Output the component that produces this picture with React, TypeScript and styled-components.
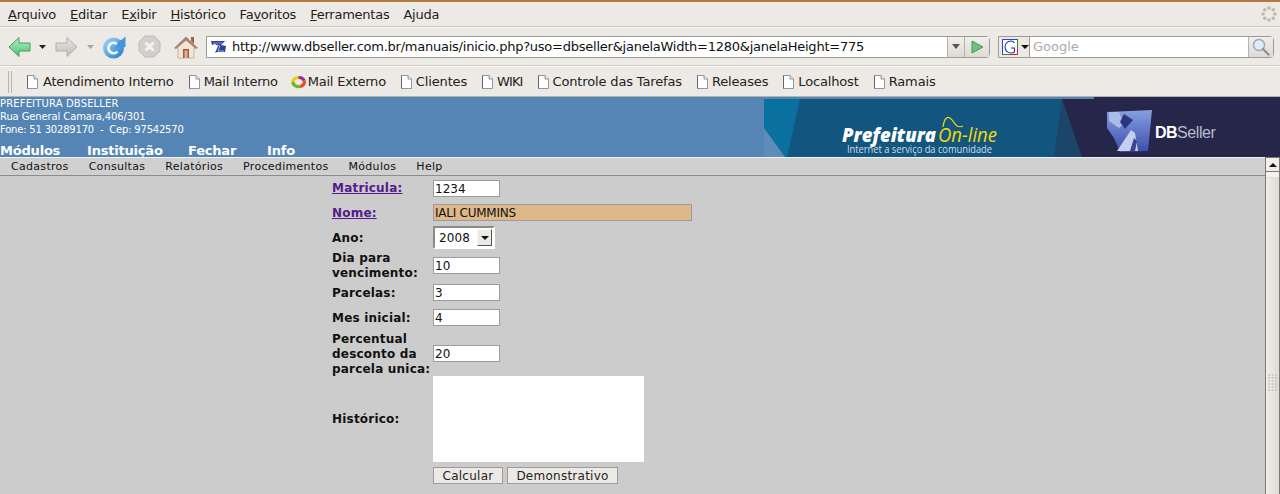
import React from 'react'
import styled, { createGlobalStyle } from 'styled-components'

const GlobalStyle = createGlobalStyle`
  * {
    box-sizing: border-box;
  }

  html, body {
    margin: 0;
    padding: 0;
    height: 494px;
    overflow: hidden;
    background: #cccccc;
    font-family: "DejaVu Sans", sans-serif;
  }
`

const Page = styled.div`
  width: 1280px;
  height: 494px;
  display: flex;
  flex-direction: column;
  overflow: hidden;
`

const MenuBar = styled.div`
  height: 27px;
  flex: 0 0 auto;
  display: flex;
  align-items: center;
  justify-content: space-between;
  padding: 0 3px 0 8px;
  background: #edeae5;
  border-top: 2px solid #b8783c;
  border-bottom: 1px solid #cdc9c2;
  font-size: 13px;
  letter-spacing: -0.24px;
  color: #1e1e1e;
`

const MenuItems = styled.div`
  display: flex;
  gap: 14px;
`

const Accel = styled.span`
  text-decoration: underline;
`

const NavBar = styled.div`
  height: 39px;
  flex: 0 0 auto;
  display: flex;
  align-items: center;
  background: #edeae5;
  border-top: 1px solid #f6f4f1;
  border-bottom: 1px solid #d3cfc8;
  padding-left: 8px;
`

const NavIcon = styled.svg<{ $mr: number }>`
  display: block;
  flex: 0 0 auto;
  margin-right: ${p => p.$mr}px;
`

const UrlBox = styled.div`
  width: 784px;
  height: 22px;
  flex: 0 0 auto;
  display: flex;
  border: 1px solid #9a9a9a;
  border-radius: 0 4px 4px 0;
  background: #fff;
  font-size: 13px;
  letter-spacing: -0.24px;
  color: #111;
`

const UrlText = styled.div`
  flex: 1 1;
  display: flex;
  align-items: center;
  gap: 5px;
  padding-left: 4px;
  white-space: nowrap;
`

const BoxButton = styled.div<{ $w: number }>`
  flex: 0 0 auto;
  width: ${p => p.$w}px;
  display: flex;
  align-items: center;
  justify-content: center;
  background: linear-gradient(#f1efeb, #dedad4);
  border-left: 1px solid #b5b2ac;
`

const SearchBox = styled.div`
  width: 276px;
  height: 22px;
  flex: 0 0 auto;
  margin-left: 8px;
  display: flex;
  border: 1px solid #9a9a9a;
  border-radius: 0 4px 4px 0;
  background: #fff;
  font-size: 13px;
`

const EngineButton = styled.div`
  width: 31px;
  flex: 0 0 auto;
  display: flex;
  align-items: center;
  gap: 3px;
  padding-left: 3px;
  background: #edeae5;
  border-right: 1px solid #9a9a9a;
`

const SearchInput = styled.div`
  flex: 1 1;
  display: flex;
  align-items: center;
  padding-left: 3px;
  color: #ababab;
`

const BookmarksBar = styled.div`
  height: 31px;
  flex: 0 0 auto;
  display: flex;
  align-items: center;
  background: #edeae5;
  border-top: 1px solid #f6f4f1;
  border-bottom: 1px solid #b5b2ac;
  font-size: 13px;
  color: #222;
`

const Grip = styled.div`
  width: 4px;
  height: 22px;
  margin-left: 8px;
  flex: 0 0 auto;
  border-left: 1px solid #b9b5ae;
  border-right: 1px solid #b9b5ae;
`

const Bookmark = styled.div<{ $ml: number; $gap: number; $ls: number }>`
  display: flex;
  align-items: center;
  gap: ${p => p.$gap}px;
  margin-left: ${p => p.$ml}px;
  letter-spacing: ${p => p.$ls}px;
  white-space: nowrap;
`

const Header = styled.div`
  height: 60px;
  flex: 0 0 auto;
  display: flex;
  justify-content: space-between;
  background: #5585b5;
`

const HeaderInfo = styled.div`
  display: flex;
  flex-direction: column;
  color: #fff;
`

const AddressLine = styled.div<{ $ls: number }>`
  font-size: 10px;
  line-height: 13px;
  letter-spacing: ${p => p.$ls}px;
  white-space: pre;
`

const HeaderLinks = styled.div`
  display: flex;
  margin-top: 7px;
  font-size: 13px;
  font-weight: bold;
  line-height: 15px;
  letter-spacing: -0.2px;
`

const HeaderLink = styled.span<{ $w: number }>`
  width: ${p => p.$w}px;
`

const Banner = styled.svg`
  display: block;
  flex: 0 0 auto;
`

const Body = styled.div`
  flex: 1 1;
  display: flex;
  min-height: 0;
`

const Main = styled.div`
  flex: 1 1;
  min-width: 0;
  background: #cccccc;
`

const SubMenu = styled.div`
  height: 19px;
  display: flex;
  align-items: center;
  gap: 20px;
  padding-left: 11px;
  background: #d0d0d0;
  border-top: 1px solid #f2f2f2;
  border-bottom: 1px solid #8c8c8c;
  font-size: 11px;
  letter-spacing: 0.3px;
  color: #111;
`

const Form = styled.div`
  padding-left: 332px;
`

const Row = styled.div<{ $h: number }>`
  height: ${p => p.$h}px;
  display: flex;
  align-items: center;
`

const Label = styled.div<{ $pt?: number }>`
  width: 101px;
  flex: 0 0 auto;
  padding-top: ${p => p.$pt ?? 2}px;
  font-size: 12px;
  line-height: 15px;
  font-weight: bold;
  letter-spacing: 0.2px;
  color: #111;
`

const LinkLabel = styled(Label)`
  color: #551a8b;
  text-decoration: underline;
`

const TextInput = styled.div<{ $w: number; $bg?: string }>`
  width: ${p => p.$w}px;
  height: 17px;
  border: 1px solid #9c9c9c;
  background: ${p => p.$bg || '#fff'};
  font-size: 12px;
  line-height: 17px;
  padding-left: 1px;
  color: #111;
`

const NameInput = styled(TextInput)`
  letter-spacing: -0.25px;
`

const Select = styled.div`
  width: 62px;
  height: 23px;
  display: flex;
  align-items: center;
  justify-content: space-between;
  padding: 0 1px 0 4px;
  background: #fff;
  border: 2px solid;
  border-color: #8a8a8a #fff #fff #8a8a8a;
  font-size: 12px;
  letter-spacing: 0.1px;
  color: #111;
`

const SelectArrow = styled.div`
  width: 15px;
  height: 17px;
  display: flex;
  align-items: center;
  justify-content: center;
  background: #edeae5;
  border: 1px solid;
  border-color: #f8f8f8 #555 #555 #f8f8f8;
`

const ArrowDown = styled.div`
  border-left: 4px solid transparent;
  border-right: 4px solid transparent;
  border-top: 4px solid #111;
`

const ArrowDownGrey = styled(ArrowDown)`
  border-top-color: #555;
  border-top-width: 5px;
`

const TextArea = styled.div`
  width: 211px;
  height: 86px;
  background: #fff;
`

const Buttons = styled.div`
  display: flex;
  gap: 4px;
  padding: 5px 0 0 101px;
`

const Button = styled.div<{ $w: number }>`
  width: ${p => p.$w}px;
  height: 17px;
  border: 1px solid #9c9c9c;
  background: #edeae5;
  font-size: 12px;
  line-height: 17px;
  letter-spacing: 0.25px;
  text-align: center;
  color: #222;
`

const ScrollBar = styled.div`
  width: 15px;
  flex: 0 0 auto;
  display: flex;
  flex-direction: column;
  border-left: 1px solid #7d7770;
  border-right: 1px solid #7d7770;
  background: linear-gradient(90deg, #f2efeb, #ded9d3);
`

const ScrollButton = styled.div`
  height: 15px;
  flex: 0 0 auto;
  display: flex;
  align-items: center;
  justify-content: center;
  background: #f2f0ed;
  border-top: 1px solid #7d7770;
  border-bottom: 1px solid #7d7770;
`

const ArrowUp = styled.div`
  border-left: 4px solid transparent;
  border-right: 4px solid transparent;
  border-bottom: 4px solid #111;
`

const ScrollCap = styled.div`
  height: 6px;
  flex: 0 0 auto;
  background: #f4f2ef;
  border-bottom: 1px solid #dfdbd5;
`

const ScrollThumb = styled.div`
  flex: 1 1;
  display: flex;
  align-items: flex-start;
  justify-content: center;
  padding-top: 196px;
`

const DocIcon = () => (
  <svg width="13" height="14" viewBox="0 0 13 14">
    <path d="M1.500.5h6.500l3.500 3.500v9.500h-10z" fill="#fff" stroke="#8d96a3" />
    <path d="M8 .5v3.500h3.500" fill="#e3e6ea" stroke="#8d96a3" />
    <path d="M1.500 .5v13" stroke="#5d6a7c" />
  </svg>
)

const RingIcon = () => (
  <svg width="15" height="14" viewBox="0 0 15 14">
    <path d="M2 7a5.500 4.500 0 0 1 5.500-4.500" fill="none" stroke="#e8d000" strokeWidth="3.200" />
    <path d="M7.500 2.500a5.500 4.500 0 0 1 5.500 3" fill="none" stroke="#a02a9a" strokeWidth="3.200" />
    <path d="M13 5.500a5.500 4.500 0 0 1-4 6" fill="none" stroke="#e0502a" strokeWidth="3.200" />
    <path d="M9 11.500a5.500 4.500 0 0 1-7-4.500" fill="none" stroke="#6ab82c" strokeWidth="3.200" />
  </svg>
)

const SiteIcon = () => (
  <svg width="16" height="16" viewBox="0 0 16 16">
    <path d="M0 2h14l-4 4 5 1-1 6H6l-2 1 3-7-3-2-3 1z" fill="#2c3f9c" />
    <path d="M6 6l3 1-2 5h6" fill="none" stroke="#a9b5e0" />
    <path d="M2 4h9" stroke="#8f9cd8" />
  </svg>
)

const BackIcon = ({ active, mr }: { active: boolean; mr: number }) => {
  const id = active ? 'bk' : 'fw'
  return (
    <NavIcon
      $mr={mr}
      width="23"
      height="22"
      viewBox="0 0 23 22"
      style={active ? undefined : { transform: 'scaleX(-1)' }}
    >
      <defs>
        <linearGradient id={id} x1="0" y1="0" x2="0" y2="1">
          <stop offset="0" stopColor={active ? '#b5efc0' : '#e8e8e6'} />
          <stop offset="1" stopColor={active ? '#4fbf75' : '#bdbdba'} />
        </linearGradient>
      </defs>
      <path
        d="M1 11 11 1.500v5.500h11v8H11v5.500z"
        fill={`url(#${id})`}
        stroke={active ? '#3f9f5f' : '#b0b0ad'}
        strokeLinejoin="round"
      />
    </NavIcon>
  )
}

const SmallCaret = ({ color, mr }: { color: string; mr: number }) => (
  <NavIcon $mr={mr} width="7" height="4" viewBox="0 0 7 4">
    <path d="M0 0h7L3.500 4z" fill={color} />
  </NavIcon>
)

const ReloadIcon = () => (
  <NavIcon $mr={12} width="24" height="24" viewBox="0 0 24 24">
    <defs>
      <linearGradient id="rl" x1="0" y1="0" x2="1" y2="1">
        <stop offset="0" stopColor="#a6dcf7" />
        <stop offset="1" stopColor="#1a78cc" />
      </linearGradient>
    </defs>
    <circle cx="11.500" cy="13" r="10.500" fill="url(#rl)" />
    <path d="M15.500 9.500a5.200 5.200 0 1 0 0 7" fill="none" stroke="#f6fafd" strokeWidth="2.600" />
    <path d="M13 12.500 23.500 12V1.500l-3.500 3-3.500 2z" fill="#3d98e0" />
  </NavIcon>
)

const StopIcon = () => (
  <NavIcon $mr={13} width="23" height="23" viewBox="0 0 23 23">
    <path d="M7 1h9l6 6v9l-6 6H7l-6-6V7z" fill="#d2d0cc" stroke="#bdbbb6" />
    <path d="M7.500 7.500l8 8m0-8-8 8" stroke="#f4f3f1" strokeWidth="3" />
  </NavIcon>
)

const HomeIcon = () => (
  <NavIcon $mr={8} width="24" height="24" viewBox="0 0 24 24">
    <path d="M4 11.500V23h16V11.500L12 4z" fill="#f0e6d8" stroke="#c7b49c" />
    <path d="M17 2h3v7l-3-3z" fill="#a5624a" />
    <path d="M0 13 12 1.500 24 13l-2 1-10-8.500L2 14z" fill="#a98370" />
    <path d="M9 14h6v9H9z" fill="#a0603c" />
    <path d="M10.500 15.500h3V23h-3z" fill="#dcb090" />
  </NavIcon>
)

const GoIcon = () => (
  <svg width="13" height="14" viewBox="0 0 13 14">
    <path d="M1 1l11 6-11 6z" fill="#6fc07a" stroke="#3f9a55" />
  </svg>
)

const GoogleIcon = () => (
  <svg width="16" height="16" viewBox="0 0 16 16">
    <rect x=".5" y=".5" width="15" height="15" fill="#fff" stroke="#2a8a2a" />
    <path d="M.5 15.500v-15h15" fill="none" stroke="#2646c8" />
    <path d="M15.500 8v7.500H8" fill="none" stroke="#c8262a" />
    <path d="M12.500 4C11.600 2.700 10.400 2 9 2 5.800 2 3 4.400 3 8s2.800 6 6 6c1.400 0 2.600-.4 3.500-1.200V9H9" fill="none" stroke="#1c34b8" strokeWidth="1.100" />
  </svg>
)

const SearchGlass = () => (
  <svg width="18" height="18" viewBox="0 0 18 18">
    <circle cx="7" cy="7" r="5.500" fill="#dcecf8" stroke="#9fa8ae" strokeWidth="1.400" />
    <path d="M11 11l5.500 5.500" stroke="#8e9296" strokeWidth="2.400" strokeLinecap="round" />
  </svg>
)

const Throbber = () => (
  <svg width="16" height="16" viewBox="0 0 16 16" fill="#bdbab4">
    <circle cx="8" cy="2" r="1.800" />
    <circle cx="12.300" cy="3.700" r="1.800" />
    <circle cx="14" cy="8" r="1.800" />
    <circle cx="12.300" cy="12.300" r="1.800" />
    <circle cx="8" cy="14" r="1.800" />
    <circle cx="3.700" cy="12.300" r="1.800" />
    <circle cx="2" cy="8" r="1.800" />
    <circle cx="3.700" cy="3.700" r="1.800" />
  </svg>
)

const ThumbGrip = () => (
  <svg width="9" height="17" viewBox="0 0 9 17" fill="#cfcac3">
    {[0, 3, 6, 9, 12, 15].map(y =>
      [0, 3.500, 7].map(x => <rect key={`${x}-${y}`} x={x} y={y} width="2" height="2" />)
    )}
  </svg>
)

const BannerArt = () => (
  <Banner width="516" height="60" viewBox="0 0 516 60">
    <defs>
      <linearGradient id="dbl" x1="0" y1="0" x2="0" y2="1">
        <stop offset="0" stopColor="#86a0de" />
        <stop offset="1" stopColor="#3c4eae" />
      </linearGradient>
    </defs>
    <rect x="0" y="2" width="516" height="58" fill="#125680" />
    <path d="M0 2h36L23 60h-2L0 31z" fill="#0a70a0" />
    <path d="M0 31l21 29H0z" fill="#5f8db8" />
    <path d="M298 2l20 58h-28z" fill="#1b4569" />
    <path d="M298 2h32V0h186v60H318z" fill="#25264a" />
    <text x="78" y="45" fontFamily="'Open Sans', sans-serif" fontSize="20" fontWeight="800" fontStyle="italic" fill="#fff" textLength="94" lengthAdjust="spacingAndGlyphs">Prefeitura</text>
    <text x="174" y="45" fontFamily="'Open Sans', sans-serif" fontSize="20" fontStyle="italic" fill="#f2d90a" textLength="59" lengthAdjust="spacingAndGlyphs">On-line</text>
    <path d="M179 30c1-8 4-11 7-9s5 7 7 8 4 1 6 0" fill="none" stroke="#f2d90a" strokeWidth="1.200" />
    <text x="83" y="56" fontFamily="'Open Sans', sans-serif" fontSize="10" fill="#d6dde3" textLength="145" lengthAdjust="spacingAndGlyphs">Internet a serviço da comunidade</text>
    <path d="M343 15l45-2-4 41-28 1-6-14-7-10z" fill="url(#dbl)" />
    <path d="M345 15h10l5 12-5 4-10-7z" fill="#a9bcea" />
    <path d="M360 17l9 6-8 9-5-7z" fill="#2c3680" />
    <path d="M353 54l14-21 4 3 3 18z" fill="#c5d0ee" />
    <path d="M366 54l4-13 3 3-2 10z" fill="#3a4690" />
    <text x="391" y="41" fontFamily="'Liberation Sans', sans-serif" fontSize="16" fontWeight="700" fill="#fff" letterSpacing="-.6">DB</text>
    <text x="413" y="41" fontFamily="'Liberation Sans', sans-serif" fontSize="16" fill="#b9bccb" letterSpacing="-.4">Seller</text>
  </Banner>
)

const bookmarks = [
  { label: 'Atendimento Interno', ml: 14, gap: 4, ls: -0.2 },
  { label: 'Mail Interno', ml: 14, gap: 3, ls: -0.24 },
  { label: 'Mail Externo', ml: 13, gap: 2, ls: -0.23, ring: true },
  { label: 'Clientes', ml: 14, gap: 3, ls: -0.15 },
  { label: 'WIKI', ml: 14, gap: 3, ls: -0.9 },
  { label: 'Controle das Tarefas', ml: 14, gap: 3, ls: -0.15 },
  { label: 'Releases', ml: 14, gap: 3, ls: -0.15 },
  { label: 'Localhost', ml: 14, gap: 3, ls: -0.15 },
  { label: 'Ramais', ml: 14, gap: 3, ls: -0.15 },
]

const App = () => {
  return (
    <Page>
      <GlobalStyle />
      <MenuBar>
        <MenuItems>
          <span><Accel>A</Accel>rquivo</span>
          <span><Accel>E</Accel>ditar</span>
          <span>E<Accel>x</Accel>ibir</span>
          <span><Accel>H</Accel>istórico</span>
          <span>Fa<Accel>v</Accel>oritos</span>
          <span><Accel>F</Accel>erramentas</span>
          <span>A<Accel>j</Accel>uda</span>
        </MenuItems>
        <Throbber />
      </MenuBar>
      <NavBar>
        <BackIcon active mr={8} />
        <SmallCaret color="#222" mr={9} />
        <BackIcon active={false} mr={9} />
        <SmallCaret color="#a5a5a2" mr={8} />
        <ReloadIcon />
        <StopIcon />
        <HomeIcon />
        <UrlBox>
          <UrlText>
            <SiteIcon />
            http://www.dbseller.com.br/manuais/inicio.php?uso=dbseller&amp;janelaWidth=1280&amp;janelaHeight=775
          </UrlText>
          <BoxButton $w={17}><ArrowDownGrey /></BoxButton>
          <BoxButton $w={25}><GoIcon /></BoxButton>
        </UrlBox>
        <SearchBox>
          <EngineButton>
            <GoogleIcon />
            <ArrowDown />
          </EngineButton>
          <SearchInput>Google</SearchInput>
          <BoxButton $w={25}><SearchGlass /></BoxButton>
        </SearchBox>
      </NavBar>
      <BookmarksBar>
        <Grip />
        {bookmarks.map(b => (
          <Bookmark key={b.label} $ml={b.ml} $gap={b.gap} $ls={b.ls}>
            {b.ring ? <RingIcon /> : <DocIcon />}
            {b.label}
          </Bookmark>
        ))}
      </BookmarksBar>
      <Header>
        <HeaderInfo>
          <AddressLine $ls={0.15}>PREFEITURA DBSELLER</AddressLine>
          <AddressLine $ls={-0.12}>Rua General Camara,406/301</AddressLine>
          <AddressLine $ls={-0.2}>{'Fone: 51 30289170  -  Cep: 97542570'}</AddressLine>
          <HeaderLinks>
            <HeaderLink $w={87}>Módulos</HeaderLink>
            <HeaderLink $w={101}>Instituição</HeaderLink>
            <HeaderLink $w={79}>Fechar</HeaderLink>
            <HeaderLink $w={40}>Info</HeaderLink>
          </HeaderLinks>
        </HeaderInfo>
        <BannerArt />
      </Header>
      <Body>
        <Main>
          <SubMenu>
            <span>Cadastros</span>
            <span>Consultas</span>
            <span>Relatórios</span>
            <span>Procedimentos</span>
            <span>Módulos</span>
            <span>Help</span>
          </SubMenu>
          <Form>
            <Row $h={24}>
              <LinkLabel $pt={0}>Matricula:</LinkLabel>
              <TextInput $w={67}>1234</TextInput>
            </Row>
            <Row $h={25}>
              <LinkLabel>Nome:</LinkLabel>
              <NameInput $w={259} $bg="#deb887">IALI CUMMINS</NameInput>
            </Row>
            <Row $h={25}>
              <Label>Ano:</Label>
              <Select>
                2008
                <SelectArrow><ArrowDown /></SelectArrow>
              </Select>
            </Row>
            <Row $h={30}>
              <Label>Dia para vencimento:</Label>
              <TextInput $w={67}>10</TextInput>
            </Row>
            <Row $h={25}>
              <Label>Parcelas:</Label>
              <TextInput $w={67}>3</TextInput>
            </Row>
            <Row $h={25}>
              <Label>Mes inicial:</Label>
              <TextInput $w={67}>4</TextInput>
            </Row>
            <Row $h={46}>
              <Label>Percentual desconto da parcela unica:</Label>
              <TextInput $w={67}>20</TextInput>
            </Row>
            <Row $h={86}>
              <Label $pt={0}>Histórico:</Label>
              <TextArea />
            </Row>
            <Buttons>
              <Button $w={70}>Calcular</Button>
              <Button $w={111}>Demonstrativo</Button>
            </Buttons>
          </Form>
        </Main>
        <ScrollBar>
          <ScrollButton><ArrowUp /></ScrollButton>
          <ScrollCap />
          <ScrollThumb><ThumbGrip /></ScrollThumb>
        </ScrollBar>
      </Body>
    </Page>
  )
}

export default App
